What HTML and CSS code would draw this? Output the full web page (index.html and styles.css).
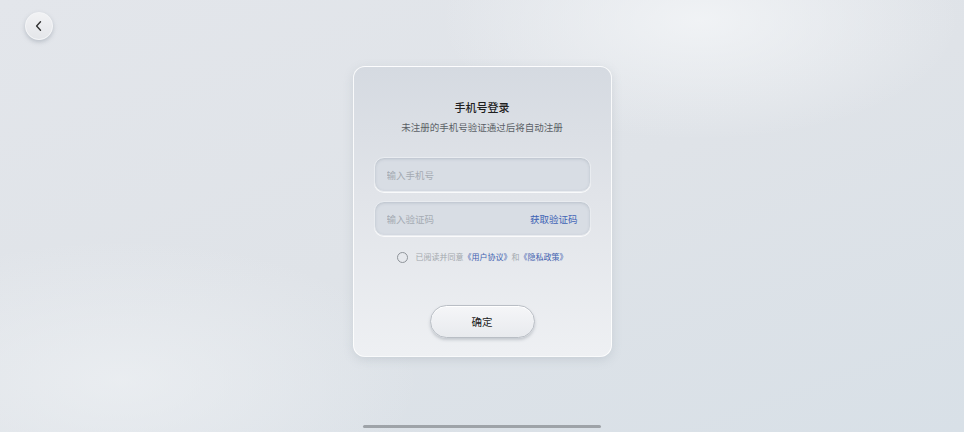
FILE: index.html
```html
<!DOCTYPE html>
<html lang="zh">
<head>
  <meta charset="UTF-8">
  <meta name="viewport" content="width=device-width, initial-scale=1.0">
  <title>手机号登录</title>
  <link rel="stylesheet" href="styles.css">
</head>
<body>
  <div class="page">
    <div class="topbar">
      <button class="back" aria-label="返回">
        <svg width="12" height="12" viewBox="0 0 12 12"><path d="M7.5 1.8 L3.6 6 L7.5 10.2" fill="none" stroke="#333" stroke-width="1.4" stroke-linecap="round" stroke-linejoin="round"/></svg>
      </button>
    </div>

    <div class="card">
      <h1 class="title">手机号登录</h1>
      <p class="subtitle">未注册的手机号验证通过后将自动注册</p>

      <div class="field">
        <input type="text" placeholder="输入手机号">
      </div>
      <div class="field">
        <input type="text" placeholder="输入验证码">
        <span class="getcode">获取验证码</span>
      </div>

      <label class="agree">
        <span class="radio"></span>
        <span>已阅读并同意<a>《用户协议》</a>和<a>《隐私政策》</a></span>
      </label>

      <button class="confirm">确定</button>
    </div>

    <div class="homebar"></div>
  </div>
</body>
</html>
```

FILE: styles.css
```css
* {
  box-sizing: border-box;
}

body {
  margin: 0;
  font-family: "Noto Sans CJK SC", "Noto Sans", sans-serif;
  color: #222;
}

.page {
  position: relative;
  width: 964px;
  height: 432px;
  overflow: hidden;
  background:
    radial-gradient(ellipse 260px 120px at 700px 20px, rgba(244,246,248,0.8), rgba(244,246,248,0)),
    radial-gradient(ellipse 300px 140px at 120px 380px, rgba(238,241,244,0.7), rgba(238,241,244,0)),
    linear-gradient(160deg, #e3e6eb 0%, #dfe3e8 50%, #d8e0e7 100%);
  display: flex;
  flex-direction: column;
  align-items: center;
}

.topbar {
  align-self: stretch;
  padding: 12px 25px 0;
  height: 66px;
}

.back {
  width: 28px;
  height: 28px;
  border-radius: 50%;
  border: 1px solid #f4f5f7;
  background: linear-gradient(180deg, #f1f2f4, #e4e6ea);
  box-shadow: 0 2px 4px rgba(110, 120, 135, 0.35);
  display: flex;
  align-items: center;
  justify-content: center;
  padding: 0;
  cursor: pointer;
}

.card {
  width: 259px;
  height: 291px;
  border-radius: 12px;
  border: 1px solid rgba(255, 255, 255, 0.85);
  background: linear-gradient(180deg, #d5dae1 0%, #e1e4e9 45%, #eef0f3 100%);
  box-shadow: 0 3px 10px rgba(140, 150, 165, 0.25);
  padding: 32px 20px 0;
  display: flex;
  flex-direction: column;
  align-items: center;
}

.title {
  margin: 0;
  font-size: 11px;
  line-height: 16px;
  font-weight: 500;
  color: #1f1f1f;
}

.subtitle {
  margin: 5px 0 0;
  font-size: 9.5px;
  line-height: 14px;
  color: #5a5f66;
}

.field {
  width: 217px;
  height: 35px;
  margin-top: 9px;
  border-radius: 10px;
  background: #d8dde4;
  border: 1px solid #e9ecf0;
  box-shadow: inset 0 1px 3px rgba(130, 140, 155, 0.35), 0 1px 0 rgba(255,255,255,0.8);
  display: flex;
  align-items: center;
  padding: 0 12px;
}

.subtitle + .field {
  margin-top: 23px;
}

.field input {
  flex: 1;
  min-width: 0;
  border: none;
  background: transparent;
  outline: none;
  font-family: inherit;
  font-size: 9.5px;
  color: #333;
  padding: 0;
}

.field input::placeholder {
  color: #a5abb3;
}

.getcode {
  font-size: 9.5px;
  color: #3f63b5;
}

.agree {
  margin-top: 15px;
  display: flex;
  align-items: center;
  gap: 8px;
  font-size: 8px;
  line-height: 12px;
  color: #a3a8ae;
}

.agree a {
  color: #4262b0;
}

.radio {
  width: 11px;
  height: 11px;
  border-radius: 50%;
  border: 1px solid #8f949a;
}

.confirm {
  margin-top: 42px;
  width: 105px;
  height: 33px;
  border-radius: 17px;
  border: 1px solid #b9bec5;
  background: linear-gradient(180deg, #f5f6f8 0%, #e8eaee 100%);
  box-shadow: inset 0 1px 0 #ffffff, 0 2px 3px rgba(120, 128, 140, 0.35);
  font-family: inherit;
  font-size: 10.5px;
  color: #222;
  cursor: pointer;
}

.homebar {
  position: absolute;
  bottom: 4px;
  left: 363px;
  width: 238px;
  height: 3px;
  border-radius: 2px;
  background: #9ea3a8;
}
```
